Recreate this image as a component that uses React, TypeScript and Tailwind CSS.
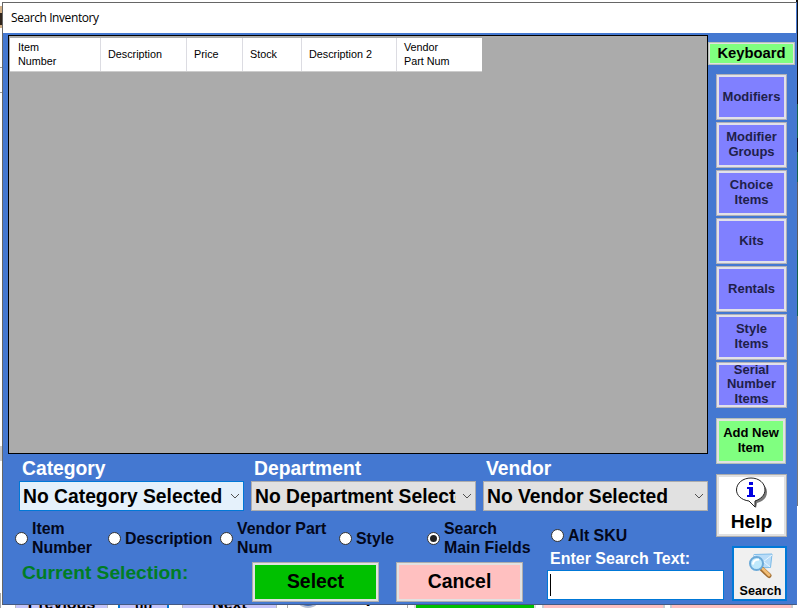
import type { ReactNode } from "react";

const columns = [
  { label: "Item\nNumber", width: "w-[91px]", pad: "pl-[8px]" },
  { label: "Description", width: "w-[86px]", pad: "pl-[7px]" },
  { label: "Price", width: "w-[56px]", pad: "pl-[7px]" },
  { label: "Stock", width: "w-[59px]", pad: "pl-[7px]" },
  { label: "Description 2", width: "w-[95px]", pad: "pl-[7px]" },
  { label: "Vendor\nPart Num", width: "w-[85px]", pad: "pl-[7px]" },
];

const filters = [
  { label: "Modifiers", pad: "pt-px" },
  { label: "Modifier\nGroups", pad: "pb-px" },
  { label: "Choice\nItems", pad: "pb-px" },
  { label: "Kits", pad: "pt-px" },
  { label: "Rentals", pad: "pt-px" },
  { label: "Style\nItems", pad: "pb-px" },
  { label: "Serial\nNumber\nItems", pad: "pb-px" },
];

function SideButton({ children, pad }: { children: ReactNode; pad: string }) {
  return (
    <button className="flex h-[46px] w-[71px] shrink-0 items-center justify-center overflow-hidden border border-[#b0b0b8] bg-[#e1e1ea] p-[2px]">
      <span className={`flex h-full w-full items-center justify-center overflow-hidden whitespace-pre bg-[#8080ff] text-center text-[13px] leading-[14.5px] text-[#20204a] ${pad}`}>
        {children}
      </span>
    </button>
  );
}

function ActionButton({ children, fill }: { children: ReactNode; fill: string }) {
  return (
    <button className="h-[40px] w-[127px] border border-[#adadad] bg-[#e1e1e1] p-[2px]">
      <span className={`block h-[34px] text-[19.4px] leading-[33px] ${fill}`}>{children}</span>
    </button>
  );
}

function Picker({ label, value, active = false }: { label: string; value: string; active?: boolean }) {
  return (
    <div className="w-[225px]">
      <div className="h-[27px] pl-[3px] pt-px text-[19.3px] leading-[27px] text-white">{label}</div>
      <div
        className={
          active
            ? "flex h-[30px] items-center border border-[#0078d7] bg-[#e5f1fb] pl-[3px]"
            : "flex h-[30px] items-center border border-[#adadad] bg-[#e1e1e1] pl-[3px]"
        }
      >
        <span className="h-[28px] w-[201px] overflow-hidden whitespace-nowrap pt-px text-[19.3px] leading-[28px]">{value}</span>
        <svg className="ml-[6px] h-[6px] w-[10px]" viewBox="0 0 10 6" fill="none" stroke="#505050">
          <path d="M1 1l4 4 4-4" />
        </svg>
      </div>
    </div>
  );
}

function Radio({ label, checked = false, width }: { label: string; checked?: boolean; width: string }) {
  return (
    <label className={`flex shrink-0 items-center gap-[4px] ${width}`}>
      <span className="flex size-[13px] shrink-0 items-center justify-center rounded-full border border-[#333] bg-white">
        {checked && <span className="size-[7px] rounded-full bg-[#222]" />}
      </span>
      <span className="whitespace-pre text-[15.9px] leading-[19px] text-[#03071a]">{label}</span>
    </label>
  );
}

function HelpIcon() {
  return (
    <svg className="h-[32px] w-[34px] shrink-0" viewBox="0 0 34 32">
      <path d="M18 4c8 0 14 5 14 11 0 6-4 9-10 11l-1 5-6-6z" fill="#777" />
      <path d="M16 1c8 0 14 5 14 12 0 5-4 9-10 11v6l-6-6C6 23 1.500 18 1.500 13 1.500 6 8 1 16 1z" fill="#fff" stroke="#222" />
      <path d="M14 5h4v3h-4zM12 10h6v8h2v2h-8v-2h2v-6h-2z" fill="#0000e0" />
    </svg>
  );
}

function SearchIcon() {
  return (
    <svg className="h-[28px] w-[26px] shrink-0" viewBox="0 0 26 28">
      <path d="M6 2.500l18-.500-1.500 13.500-16 .500z" fill="#b9dcf8" stroke="#7dbbe8" />
      <path d="M6 3l9 7 9-7M16 10l6 5" fill="none" stroke="#e9f6ff" />
      <path d="M14.500 17.500l6.500 6" stroke="#a06c30" strokeWidth="5" strokeLinecap="round" />
      <path d="M15 17l6 6" stroke="#f2bd75" strokeWidth="3" strokeLinecap="round" />
      <circle cx="8.500" cy="11.500" r="6.500" fill="#bfe8fb" stroke="#6aa9d8" strokeWidth="2" />
      <path d="M5 12.500c0-4 3-5 6-5" fill="none" stroke="#fff" strokeWidth="2" />
    </svg>
  );
}

function Backdrop() {
  return (
    <div className="flex h-full flex-col justify-between">
      <div className="flex justify-between">
        <div className="h-[500px] w-[3px]">
          <div className="h-[6px]" />
          <div className="h-[22px] bg-[#d2af86] pt-[7px]"><div className="h-[12px] w-[2px] bg-[#30251c]" /></div>
          <div className="h-[40px] border-b border-[#999]" />
          <div className="h-[25px] border-b border-[#999]" />
          <div className="h-[353px]" />
          <div className="h-[15px] bg-[#ccc]" />
        </div>
        <div className="flex w-[2px] flex-col">
          <div className="h-[104px] bg-[#111]" />
          <div className="h-[34px] bg-[#17614d]" />
          <div className="h-[14px] bg-[#101428]" />
          <div className="h-[30px] bg-[#17614d]" />
          <div className="h-[68px] bg-[#5c5c5c]" />
          <div className="h-[66px] bg-[#17614d]" />
          <div className="h-[190px] bg-[#777]" />
        </div>
      </div>
      <div className="flex h-[15px] items-stretch overflow-hidden border-l border-[#aaa] pl-[14px]">
        <div className="w-[93px] border-x border-[#bbb] bg-[#c5c5fa] text-center text-[16px] leading-[21px]">Previous</div>
        <div className="ml-[10px] w-[51px] border-x-2 border-[#0078d7] bg-[#c5c5fa] text-center text-[14px] leading-[25px]">up</div>
        <div className="ml-[13px] w-[95px] border-x border-[#bbb] bg-[#c5c5fa] text-center text-[16px] leading-[21px]">Next</div>
        <div className="ml-[10px] flex w-[121px] items-end border-x border-[#aaa] bg-white pl-[7px]">
          <div className="h-[14px] w-[26px] shrink-0 rounded-b-full border-2 border-[#b5bfd3] bg-[#416db7]" />
          <span className="ml-[15px] text-[19px] leading-[24px]">Help</span>
        </div>
        <div className="ml-[6px] w-[122px] border-x-2 border-[#ddd] bg-[#00c000]" />
        <div className="ml-[6px] w-[123px] border-x-2 border-[#ccc] bg-[#ffc0c0]" />
        <div className="ml-[5px] w-[123px] border-x-2 border-[#ccc] bg-[#ffc0c0]" />
      </div>
    </div>
  );
}

export default function App() {
  return (
    <div className="relative h-[608px] w-[798px] overflow-hidden bg-white font-['Liberation_Sans',Arial,sans-serif] font-bold text-black">
      <Backdrop />
      <div className="absolute left-[2px] top-[2px] flex h-[603px] w-[795px] flex-col border border-[#666] border-b-[#455a83] border-r-[#4878d0] bg-[#4478d1]">
        <div className="h-[30px] shrink-0 bg-white pl-[8px] font-['Open_Sans','Noto_Sans',sans-serif] text-[12px] font-normal leading-[30px]">
          <span className="tracking-[-0.42px]">Search Inventory</span>
        </div>
        <div className="flex grow pl-[5px]">
          <main className="flex w-[700px] shrink-0 flex-col pt-[2px]">
            <div className="h-[419px] border border-black bg-[#ababab] pl-px pt-[2px]">
              <div className="flex h-[34px] w-[472px] border-b border-[#ccc] bg-white text-[10.8px] font-normal leading-[14px]">
                {columns.map((column, index) => (
                  <div
                    key={column.label}
                    className={`flex items-center whitespace-pre pb-[2px] ${column.pad} ${column.width} ${index < 5 ? "border-r border-[#dcdce2]" : ""}`}
                  >
                    {column.label}
                  </div>
                ))}
              </div>
            </div>
            <div className="flex gap-[7px] pl-[11px]">
              <Picker label="Category" value="No Category Selected" active />
              <Picker label="Department" value="No Department Selected" />
              <Picker label="Vendor" value="No Vendor Selected" />
            </div>
            <div className="flex grow">
              <section className="flex w-[539px] shrink-0 flex-col pt-[8px]">
                <div className="flex h-[38px] pl-[7px]">
                  <Radio label={"Item\nNumber"} width="w-[93px]" />
                  <Radio label="Description" width="w-[112px]" />
                  <Radio label={"Vendor Part\nNum"} width="w-[119px]" />
                  <Radio label="Style" width="w-[88px]" />
                  <Radio label={"Search\nMain Fields"} checked width="w-[106px]" />
                </div>
                <div className="flex pl-[14px] pt-[5px]">
                  <div className="w-[230px] pt-px text-[19.2px] leading-[20px] text-[#007d24]">Current Selection:</div>
                  <div className="flex gap-[17px]">
                    <ActionButton fill="bg-[#00c000]">Select</ActionButton>
                    <ActionButton fill="bg-[#ffc0c0]">Cancel</ActionButton>
                  </div>
                </div>
              </section>
              <section className="w-[177px] shrink-0 pt-[15px]">
                <div className="pl-[4px]"><Radio label="Alt SKU" width="w-[100px]" /></div>
                <div className="pl-[3px] pt-[4px] text-[16px] leading-[19px] text-white">Enter Search Text:</div>
                <div className="mt-[2px] flex h-[30px] items-center border border-[#0078d7] bg-white pl-[2px]">
                  <span className="h-[22px] w-px bg-black" />
                </div>
              </section>
            </div>
          </main>
          <aside className="flex w-[88px] shrink-0 flex-col pt-[9px]">
            <button className="h-[23px] w-[87px] shrink-0 border border-[#b5c0b8] bg-[#e1e1e1] p-px">
              <span className="block h-[19px] bg-[#80ff80] text-[14.8px] leading-[19px]">Keyboard</span>
            </button>
            <div className="flex flex-col gap-[2px] pl-[8px] pt-[9px]">
              {filters.map(({ label, pad }) => <SideButton key={label} pad={pad}>{label}</SideButton>)}
            </div>
            <button className="ml-[8px] mt-[10px] h-[46px] w-[70px] shrink-0 border border-[#b5bfb8] bg-[#e1e1e1] p-[2px]">
              <span className="block h-[40px] bg-[#80ff80] pt-[4px] text-[13px] leading-[15px]">Add New<br />Item</span>
            </button>
            <button className="ml-[8px] mt-[10px] h-[63px] w-[71px] shrink-0 border border-[#adadad] bg-[#e1e1e1] p-[2px] text-[19.2px] leading-[25px]">
              <span className="flex h-[57px] flex-col items-center bg-white">
                <HelpIcon />
                Help
              </span>
            </button>
            <button className="ml-[24px] mt-[9px] flex h-[55px] w-[55px] shrink-0 flex-col items-center border-2 border-[#0078d7] bg-[#f0f0f0] pl-[2px] pt-[4px] text-[12.6px] leading-[23px]">
              <SearchIcon />
              Search
            </button>
          </aside>
        </div>
      </div>
    </div>
  );
}
